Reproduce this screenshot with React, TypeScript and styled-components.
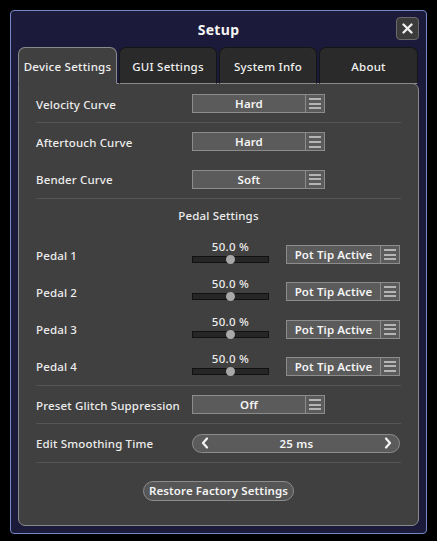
import React from "react";
import styled, { createGlobalStyle } from "styled-components";

const Global = createGlobalStyle`
  html, body { margin: 0; padding: 0; background: #000; }
  body { font-family: "Noto Sans", "Open Sans", sans-serif; color: #f2f2f2; }
  * { box-sizing: border-box; }
`;

const Screen = styled.div`
  width: 437px;
  height: 541px;
  padding: 10px 10px 7px 10px;
  background: #000;
`;

const Dialog = styled.div`
  height: 100%;
  background: #1b1a3a;
  border: 1px solid #7387c4;
  border-radius: 4px;
  padding: 0 7px 7px 7px;
  display: flex;
  flex-direction: column;
`;

const Header = styled.div`
  height: 36px;
  position: relative;
  display: flex;
  align-items: center;
  justify-content: center;
`;

const Title = styled.div`
  font-size: 14px;
  font-weight: 700;
  letter-spacing: 0.3px;
  color: #f4f4f4;
`;

const CloseButton = styled.button`
  position: absolute;
  right: 0;
  top: 6px;
  width: 23px;
  height: 23px;
  padding: 0;
  border-radius: 4px;
  border: 1px solid #6a6a6a;
  background: #3c3c3c;
  display: flex;
  align-items: center;
  justify-content: center;
`;

const Tabs = styled.div`
  display: grid;
  grid-template-columns: 99px 98px 98px 99px;
  column-gap: 2px;
  height: 37px;
  position: relative;
  z-index: 2;
  margin-bottom: -1px;
`;

const Tab = styled.div<{ $active?: boolean }>`
  display: flex;
  align-items: center;
  justify-content: center;
  font-size: 11.5px;
  font-weight: 500;
  letter-spacing: 0.25px;
  color: #f0f0f0;
  white-space: nowrap;
  border-radius: 7px 7px 0 0;
  background: ${(p) => (p.$active ? "#404040" : "#2a2a2a")};
  border: 1px solid ${(p) => (p.$active ? "#8a8a8a" : "#151515")};
  border-bottom: ${(p) => (p.$active ? "1px solid #404040" : "1px solid #8a8a8a")};
  padding-top: 2px;
`;

const Panel = styled.div`
  flex: 1;
  background: #404040;
  border: 1px solid #8a8a8a;
  border-radius: 0 7px 7px 7px;
  padding: 1px 17px 0 17px;
  display: flex;
  flex-direction: column;
`;

const Row = styled.div<{ $h?: number }>`
  height: ${(p) => p.$h ?? 37.3}px;
  display: grid;
  grid-template-columns: 156px 1fr;
  align-items: center;
`;

const Label = styled.div`
  font-size: 11.5px;
  font-weight: 500;
  letter-spacing: 0.15px;
  white-space: nowrap;
  color: #ececec;
  padding-top: 1px;
`;

const Separator = styled.div`
  height: 1px;
  background: #555555;
`;

const SectionTitle = styled.div`
  height: 37px;
  padding-top: 9px;
  text-align: center;
  font-size: 11.5px;
  font-weight: 500;
  letter-spacing: 0.15px;
  color: #ececec;
`;

const Select = styled.div<{ $w: number }>`
  width: ${(p) => p.$w}px;
  height: 19px;
  display: flex;
  border: 1px solid #8c8c8c;
  background: #5b5b5b;
`;

const SelectValue = styled.div`
  flex: 1;
  display: flex;
  align-items: center;
  justify-content: center;
  font-size: 11.5px;
  font-weight: 600;
  letter-spacing: 0.1px;
  white-space: nowrap;
  color: #f4f4f4;
  border-right: 1px solid #8c8c8c;
`;

const MenuBox = styled.div`
  width: 18px;
  display: flex;
  flex-direction: column;
  align-items: center;
  justify-content: center;
  gap: 2.6px;
`;

const MenuLine = styled.div`
  width: 12px;
  height: 2px;
  background: #b4b4b4;
`;

const PedalControls = styled.div`
  display: flex;
  align-items: center;
  gap: 17px;
`;

const SliderBox = styled.div`
  width: 77px;
  display: flex;
  flex-direction: column;
  align-items: center;
  margin-top: -6px;
`;

const SliderValue = styled.div`
  font-size: 11.5px;
  font-weight: 500;
  letter-spacing: 0.3px;
  color: #ececec;
  line-height: 14px;
`;

const Track = styled.div`
  position: relative;
  width: 77px;
  height: 7px;
  margin-top: 2px;
  background: #262626;
  border: 1px solid #111;
`;

const Thumb = styled.div`
  position: absolute;
  top: 50%;
  width: 9px;
  height: 9px;
  margin-left: -4.5px;
  margin-top: -4.5px;
  border-radius: 50%;
  background: #a8a8a8;
`;

const Stepper = styled.div`
  width: 208px;
  height: 19px;
  border-radius: 10px;
  border: 1px solid #8c8c8c;
  background: #5b5b5b;
  display: flex;
  align-items: center;
  justify-content: space-between;
  padding: 0 7px 0 8px;
`;

const StepValue = styled.div`
  font-size: 11.5px;
  font-weight: 600;
  letter-spacing: 0.2px;
  color: #f4f4f4;
`;

const Footer = styled.div`
  display: flex;
  justify-content: center;
  padding-top: 18px;
`;

const PillButton = styled.button`
  height: 20px;
  padding: 0 5px;
  border-radius: 10px;
  border: 1px solid #8c8c8c;
  background: #565656;
  color: #f4f4f4;
  font-family: "Noto Sans", sans-serif;
  font-size: 11.5px;
  font-weight: 600;
  letter-spacing: 0.1px;
  display: flex;
  align-items: center;
`;

const MenuIcon = () => (
  <MenuBox>
    <MenuLine />
    <MenuLine />
    <MenuLine />
  </MenuBox>
);

const Dropdown = ({ value, width }: { value: string; width: number }) => (
  <Select $w={width}>
    <SelectValue>{value}</SelectValue>
    <MenuIcon />
  </Select>
);

const Slider = ({ value }: { value: number }) => (
  <SliderBox>
    <SliderValue>{value.toFixed(1)} %</SliderValue>
    <Track>
      <Thumb style={{ left: `${value}%` }} />
    </Track>
  </SliderBox>
);

const Chevron = ({ dir }: { dir: "left" | "right" }) => (
  <svg width="8" height="12" viewBox="0 0 8 12">
    <path
      d={dir === "left" ? "M6 1.5 L2 6 L6 10.5" : "M2 1.5 L6 6 L2 10.5"}
      fill="none"
      stroke="#f4f4f4"
      strokeWidth="2.2"
      strokeLinecap="round"
      strokeLinejoin="round"
    />
  </svg>
);

export default function App() {
  const pedals = [1, 2, 3, 4];
  return (
    <Screen>
      <Global />
      <Dialog>
        <Header>
          <Title>Setup</Title>
          <CloseButton aria-label="close">
            <svg width="11" height="11" viewBox="0 0 11 11">
              <path d="M1.5 1.5 L9.5 9.5 M9.5 1.5 L1.5 9.5" stroke="#f0f0f0" strokeWidth="2.3" strokeLinecap="round" />
            </svg>
          </CloseButton>
        </Header>
        <Tabs>
          <Tab $active>Device Settings</Tab>
          <Tab>GUI Settings</Tab>
          <Tab>System Info</Tab>
          <Tab>About</Tab>
        </Tabs>
        <Panel>
          <Row>
            <Label>Velocity Curve</Label>
            <Dropdown value="Hard" width={133} />
          </Row>
          <Separator />
          <Row>
            <Label>Aftertouch Curve</Label>
            <Dropdown value="Hard" width={133} />
          </Row>
          <Row>
            <Label>Bender Curve</Label>
            <Dropdown value="Soft" width={133} />
          </Row>
          <Separator />
          <SectionTitle>Pedal Settings</SectionTitle>
          {pedals.map((n) => (
            <Row key={n}>
              <Label>Pedal {n}</Label>
              <PedalControls>
                <Slider value={50} />
                <Dropdown value="Pot Tip Active" width={114} />
              </PedalControls>
            </Row>
          ))}
          <Separator />
          <Row>
            <Label>Preset Glitch Suppression</Label>
            <Dropdown value="Off" width={133} />
          </Row>
          <Separator />
          <Row>
            <Label>Edit Smoothing Time</Label>
            <Stepper>
              <Chevron dir="left" />
              <StepValue>25 ms</StepValue>
              <Chevron dir="right" />
            </Stepper>
          </Row>
          <Separator />
          <Footer>
            <PillButton>Restore Factory Settings</PillButton>
          </Footer>
        </Panel>
      </Dialog>
    </Screen>
  );
}
